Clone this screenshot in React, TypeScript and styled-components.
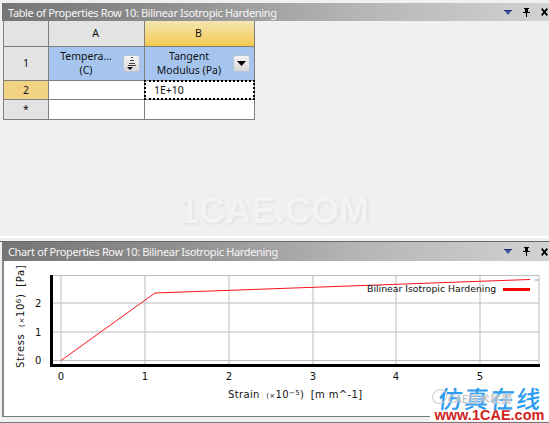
import styled, { createGlobalStyle } from 'styled-components';

const GlobalStyle = createGlobalStyle`
  html, body {
    margin: 0;
    padding: 0;
    background: #f0f0f0;
  }
`;

const Page = styled.div`
  position: relative;
  width: 549px;
  height: 423px;
  overflow: hidden;
  display: flex;
  flex-direction: column;
  font-family: "Noto Sans", sans-serif;
  background: #f0f0f0;
`;

const TablePane = styled.section`
  height: 233px;
  margin-top: 3px;
  display: flex;
  flex-direction: column;
  background: #f0f0f0;
  position: relative;
`;

const PaneGap = styled.div`
  height: 5px;
  border-top: 2px solid #fff;
  box-sizing: border-box;
`;

const ChartPane = styled.section`
  height: 176px;
  display: flex;
  flex-direction: column;
  border-top: 1px solid #666;
  box-sizing: border-box;
`;

const TitleBar = styled.header<{ $h: number }>`
  height: ${(p) => p.$h}px;
  flex: none;
  margin-left: 2px;
  display: flex;
  align-items: center;
  padding: 0 1px 0 6px;
  background: linear-gradient(90deg, #757575 0%, #8e8e8e 30%, #b5b5b5 65%, #d2d2d2 100%);
`;

const TitleText = styled.h2`
  flex: 1;
  margin: 0;
  font-size: 11px;
  letter-spacing: -0.35px;
  font-weight: 400;
  color: #f6f6f6;
  white-space: nowrap;
`;

const TitleIcons = styled.div`
  display: flex;
  align-items: center;
  gap: 11px;
`;

const GridTable = styled.table`
  margin-left: 3px;
  border-collapse: collapse;
  table-layout: fixed;
  width: 252px;
  font-size: 10.5px;
  color: #111;
  border-right: 1px solid #7f7f7f;
  border-bottom: 1px solid #7f7f7f;
`;

const Cell = styled.td`
  padding: 0;
  border: 1px solid #7f7f7f;
  border-top: 0;
  text-align: center;
  background: #fff;
  position: relative;
  box-sizing: border-box;
`;

const HeadCell = styled(Cell)<{ $active?: boolean }>`
  background: ${(p) =>
    p.$active ? 'linear-gradient(180deg, #f3e6b4 0%, #f4c94f 100%)' : '#e3e3e3'};
  padding-right: 2px;
`;

const RowHead = styled(Cell)<{ $active?: boolean }>`
  background: ${(p) => (p.$active ? '#f2d383' : '#e3e3e3')};
`;

const FieldCell = styled(Cell)`
  background: #a5c5ef;
  line-height: 14px;
`;

const FieldInner = styled.div`
  display: flex;
  align-items: center;
  justify-content: space-between;
  padding: 0 4px 0 3px;
`;

const FieldLabel = styled.span`
  flex: 1;
  text-align: center;
  padding-right: 3px;
`;

const FieldButton = styled.span`
  flex: none;
  width: 17px;
  height: 17px;
  border-radius: 3px;
  display: flex;
  align-items: center;
  justify-content: center;
  background: linear-gradient(180deg, #f4f4f4, #d8d8d8);
  border: 1px solid #b6c4d6;
  box-sizing: border-box;
`;

const ValueCell = styled(Cell)`
  text-align: left;
  padding-left: 9px;
  &::after {
    content: '';
    position: absolute;
    inset: -1px;
    border: 2px dotted #000;
  }
`;

const Ghost = styled.div`
  position: absolute;
  left: 179px;
  top: 188px;
  font-family: "Liberation Sans", sans-serif;
  font-weight: 700;
  font-size: 36px;
  line-height: 40px;
  color: #f3f3f3;
  text-shadow: 1px 1px 3px #dcdcdc;
  white-space: nowrap;
`;

const ChartBody = styled.div`
  flex: 1;
  min-height: 0;
  margin-left: 2px;
  background: #fff;
  border-left: 2px solid #8a8a8a;
  border-bottom: 1px solid #777;
`;

const BottomEdge = styled.div`
  margin-top: 5px;
  height: 1px;
  background: #777;
`;

const Stamp = styled.div`
  position: absolute;
  right: 0;
  bottom: 2px;
  width: 119px;
  text-align: center;
`;

const StampMark = styled.div`
  position: relative;
  height: 25px;
  font-family: "Noto Sans CJK SC", sans-serif;
  font-weight: 500;
  font-size: 24px;
  line-height: 25px;
  letter-spacing: 2px;
  padding-left: 2px;
  color: #2a9bf0;
  transform: skewX(-6deg);
  text-shadow: 0 0 2px #fff;
  white-space: nowrap;
`;

const StampRing = styled.span`
  position: absolute;
  left: 2px;
  top: 4px;
  width: 13px;
  height: 13px;
  border: 1px solid #ccc;
  border-radius: 50%;
`;

const StampFaint = styled.span`
  position: absolute;
  left: 18px;
  top: 6px;
  font-size: 11px;
  line-height: 14px;
  font-weight: 400;
  letter-spacing: 0;
  color: #b9b9b9;
`;

const StampSite = styled.div`
  font-family: "Liberation Sans", sans-serif;
  font-weight: 700;
  font-size: 14.5px;
  line-height: 11px;
  color: #d2221c;
  background: #fff;
  white-space: nowrap;
`;

const tickText = {
  fontFamily: '"DejaVu Sans", sans-serif',
  fontSize: 10,
  fill: '#111',
};

const xGrid = [61, 145, 229, 313, 396, 480, 539];
const yGrid = [275.5, 303, 332, 360.5];

function DownArrow() {
  return (
    <svg width="8" height="5" viewBox="0 0 8 5">
      <path d="M0 0h8L4 5z" fill="#3f4f9a" />
      <path d="M0 0h8v1H0z" fill="#24306e" />
    </svg>
  );
}

function PinIcon() {
  return (
    <svg width="7" height="9" viewBox="0 0 7 9">
      <path d="M1 0h5v1H5v3h2v1H4v4H3V5H0V4h2V1H1z" fill="#000" />
    </svg>
  );
}

function CloseIcon() {
  return (
    <svg width="7" height="8" viewBox="0 0 7 8">
      <path d="M.7 .6l5.6 6.8M6.3 .6L.7 7.4" stroke="#000" strokeWidth="1.7" />
    </svg>
  );
}

function PaneIcons() {
  return (
    <TitleIcons>
      <DownArrow />
      <PinIcon />
      <CloseIcon />
    </TitleIcons>
  );
}

function SortGlyph() {
  return (
    <svg width="11" height="13" viewBox="0 0 11 13">
      <path d="M5 0h2v1H5zM4 3h4v1H4zM3 6h6v1H3zM2 8h8v1H2z" fill="#444" />
      <path d="M1 10h6L4 13z" fill="#000" />
    </svg>
  );
}

function MenuGlyph() {
  return (
    <svg width="9" height="5" viewBox="0 0 9 5">
      <path d="M0 0h9L4.5 5z" fill="#000" />
    </svg>
  );
}

function PropertyChart() {
  return (
    <svg width="545" height="154" viewBox="4 261 545 154" style={{ display: 'block' }}>
      {xGrid.map((x) => (
        <line key={x} x1={x} x2={x} y1={275} y2={366} stroke="#bdbdbd" strokeWidth="1" />
      ))}
      {yGrid.map((y) => (
        <line key={y} x1={51} x2={539} y1={y} y2={y} stroke="#bdbdbd" strokeWidth="1" />
      ))}
      <rect x="50" y="275" width="3" height="92" fill="#000" />
      <rect x="50" y="364" width="490" height="3" fill="#000" />
      <polyline points="61,360.5 155,293 530,279.5" fill="none" stroke="#f8101c" strokeWidth="1" />
      <rect x="535" y="279" width="4" height="2" fill="#c5c5f0" />
      <rect x="503" y="288" width="27" height="3" fill="#f00" />
      <text x="367" y="292" {...tickText} fontSize="9.3">
        Bilinear Isotropic Hardening
      </text>
      {[0, 1, 2, 3, 4, 5].map((n, i) => (
        <text key={n} x={xGrid[i]} y={380} textAnchor="middle" {...tickText}>
          {n}
        </text>
      ))}
      <text x="35" y="364" {...tickText}>0</text>
      <text x="35" y="336" {...tickText}>1</text>
      <text x="35" y="307" {...tickText}>2</text>
      <text x="228" y="398" {...tickText} letterSpacing="0.35">
        Strain <tspan fontSize="7" dx="3">(×</tspan>10<tspan fontSize="7" dy="-3">−5</tspan>
        <tspan dy="3">)</tspan> <tspan dx="3">[m m^-1]</tspan>
      </text>
      <text transform="translate(24 368) rotate(-90)" {...tickText} letterSpacing="0.6">
        Stress <tspan fontSize="7" dx="3">(×</tspan>10<tspan fontSize="7" dy="-3">6</tspan>
        <tspan dy="3">)</tspan> <tspan dx="3">[Pa]</tspan>
      </text>
    </svg>
  );
}

export default function App() {
  return (
    <Page>
      <GlobalStyle />
      <TablePane>
        <TitleBar $h={18}>
          <TitleText>Table of Properties Row 10: Bilinear Isotropic Hardening</TitleText>
          <PaneIcons />
        </TitleBar>
        <GridTable>
          <colgroup>
            <col style={{ width: 45 }} />
            <col style={{ width: 96 }} />
            <col style={{ width: 110 }} />
          </colgroup>
          <tbody>
            <tr style={{ height: 25 }}>
              <HeadCell />
              <HeadCell>A</HeadCell>
              <HeadCell $active>B</HeadCell>
            </tr>
            <tr style={{ height: 34 }}>
              <RowHead>1</RowHead>
              <FieldCell>
                <FieldInner>
                  <FieldLabel>
                    Tempera...
                    <br />
                    (C)
                  </FieldLabel>
                  <FieldButton>
                    <SortGlyph />
                  </FieldButton>
                </FieldInner>
              </FieldCell>
              <FieldCell>
                <FieldInner>
                  <FieldLabel>
                    Tangent
                    <br />
                    Modulus (Pa)
                  </FieldLabel>
                  <FieldButton>
                    <MenuGlyph />
                  </FieldButton>
                </FieldInner>
              </FieldCell>
            </tr>
            <tr style={{ height: 19 }}>
              <RowHead $active>2</RowHead>
              <Cell />
              <ValueCell>1E+10</ValueCell>
            </tr>
            <tr style={{ height: 20 }}>
              <RowHead>*</RowHead>
              <Cell />
              <Cell />
            </tr>
          </tbody>
        </GridTable>
        <Ghost>1CAE.COM</Ghost>
      </TablePane>
      <PaneGap />
      <ChartPane>
        <TitleBar $h={19}>
          <TitleText>Chart of Properties Row 10: Bilinear Isotropic Hardening</TitleText>
          <PaneIcons />
        </TitleBar>
        <ChartBody>
          <PropertyChart />
        </ChartBody>
      </ChartPane>
      <BottomEdge />
      <Stamp>
        <StampMark>
          <StampRing />
          <StampFaint>CAE技术联盟</StampFaint>
          仿真在线
        </StampMark>
        <StampSite>www.1CAE.com</StampSite>
      </Stamp>
    </Page>
  );
}
